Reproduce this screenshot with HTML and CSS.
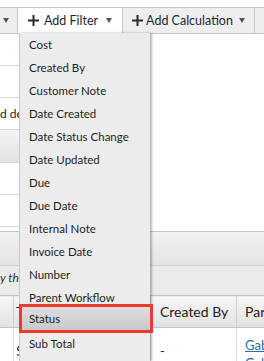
FILE: index.html
```html
<!DOCTYPE html>
<html>
<head>
    <meta name="viewport" content="width=device-width, initial-scale=1">
    <link rel="stylesheet" href="styles.css">
</head>
<body>

<div class="page">

    <div class="toolbar">
        <span class="tb-btn tb-cut"><span class="caret"></span></span>
        <span class="tb-btn tb-open">
            <svg class="plus" width="11" height="11" viewBox="0 0 11 11"><path d="M5.5 0v11M0 5.5h11" stroke="#2b2b2b" stroke-width="2"/></svg>
            <span class="tb-label">Add Filter</span>
            <span class="caret"></span>
        </span>
        <span class="tb-btn tb-calc">
            <svg class="plus" width="11" height="11" viewBox="0 0 11 11"><path d="M5.5 0v11M0 5.5h11" stroke="#2b2b2b" stroke-width="2"/></svg>
            <span class="tb-label">Add Calculation</span>
            <span class="caret"></span>
        </span>
        <span class="tb-btn tb-next"></span>
    </div>

    <div class="upper">
        <div class="side">
            <div class="row"></div>
            <div class="row"></div>
            <div class="row"><span class="field">d descending</span></div>
            <div class="row row-gray"></div>
            <div class="row"></div>
            <div class="row"></div>
        </div>
        <div class="main"></div>
    </div>

    <div class="bar"></div>
    <div class="hint">y the selected column</div>

    <table class="grid">
        <tr>
            <th class="c0"></th>
            <th class="c1">Total</th>
            <th class="c2">Created By</th>
            <th class="c3">Parent</th>
        </tr>
        <tr>
            <td class="c0"></td>
            <td class="c1">$0.00</td>
            <td class="c2">-</td>
            <td class="c3"><a href="#">Gabriel</a><br><a href="#">Gabriel</a></td>
        </tr>
    </table>

    <div class="menu">
        <div class="item">Cost</div>
        <div class="item">Created By</div>
        <div class="item">Customer Note</div>
        <div class="item">Date Created</div>
        <div class="item">Date Status Change</div>
        <div class="item">Date Updated</div>
        <div class="item">Due</div>
        <div class="item">Due Date</div>
        <div class="item">Internal Note</div>
        <div class="item">Invoice Date</div>
        <div class="item">Number</div>
        <div class="item">Parent Workflow</div>
        <div class="item selected">Status</div>
        <div class="item">Sub Total</div>
    </div>

</div>

</body>
</html>
```

FILE: styles.css
```css
body {
    margin: 0;
    font-family: Lato, "Open Sans", sans-serif;
    color: #222;
    background: #fff;
}

.page {
    position: relative;
    width: 264px;
    height: 361px;
    overflow: hidden;
}

/* toolbar */
.toolbar {
    display: flex;
    margin-top: 7px;
    height: 25px;
    border-top: 1px solid #c8c8c8;
    border-bottom: 1px solid #c8c8c8;
    background: #eeeeee;
}

.tb-btn {
    display: flex;
    align-items: center;
    justify-content: center;
    border-right: 1px solid #c8c8c8;
    font-size: 12.5px;
    color: #262630;
    white-space: nowrap;
}

.tb-label {
    margin: 0 8px 0 5px;
}

.tb-cut {
    width: 18px;
    justify-content: flex-start;
    padding-left: 3px;
    box-sizing: border-box;
}

.tb-open {
    width: 104px;
    background: #fff;
}

.tb-calc {
    width: 131px;
}

.tb-calc .tb-label {
    margin: 0 6px 0 3px;
}

.tb-next {
    flex: 1;
    border-right: none;
}

.plus {
    display: block;
}

.caret {
    width: 0;
    height: 0;
    border-left: 3.5px solid transparent;
    border-right: 3.5px solid transparent;
    border-top: 5px solid #555;
}

/* background content */
.upper {
    display: flex;
    height: 197px;
}

.side {
    width: 150px;
}

.row {
    height: 31px;
    border-bottom: 1px solid #d6d6d6;
    display: flex;
    align-items: center;
    font-size: 12px;
}

.row-gray {
    height: 32px;
    background: linear-gradient(#f4f4f4, #e2e2e2);
}

.field {
    white-space: nowrap;
}

.main {
    flex: 1;
    background: #fff;
}

.bar {
    height: 33px;
    border-top: 1px solid #c4c4c4;
    background: linear-gradient(#f3f3f3, #e3e3e3);
}

.hint {
    height: 29px;
    line-height: 24px;
    border-top: 1px solid #d0d0d0;
    background: #ebebeb;
    font-size: 12px;
    font-style: italic;
    color: #333;
    white-space: nowrap;
}

.grid {
    border-collapse: collapse;
    table-layout: fixed;
    width: 300px;
    font-size: 14px;
}

.grid th {
    height: 31px;
    text-align: left;
    font-weight: normal;
    color: #222;
    background: linear-gradient(#f6f6f6, #e2e2e2);
    border-top: 1px solid #c4c4c4;
    border-bottom: 1px solid #c4c4c4;
    border-left: 1px solid #cfcfcf;
    padding: 0 0 0 8px;
    white-space: nowrap;
    overflow: hidden;
}

.grid td {
    vertical-align: top;
    padding: 8px 0 0 8px;
    font-size: 13px;
    border-left: 1px solid #dcdcdc;
    white-space: nowrap;
    overflow: hidden;
}

.grid .c0 { width: 13px; padding: 0; border-left: none; }
.grid .c1 { width: 134px; padding-left: 2px; }
.grid .c2 { width: 76px; padding-left: 9px; }
.grid td.c1 { padding-top: 15px; }
.grid td.c2 { padding-top: 15px; }

.grid a {
    color: #1f6fa8;
    font-size: 13px;
    line-height: 18px;
}

/* dropdown menu */
.menu {
    position: absolute;
    top: 33px;
    left: 19px;
    width: 130px;
    bottom: 0;
    background: #ececec;
    border-left: 1px solid #c8c8c8;
    box-shadow: 2px 0 2px rgba(0, 0, 0, 0.28);
}

.item {
    height: 23px;
    line-height: 23px;
    padding-left: 9px;
    font-size: 11.5px;
    color: #1e1e1e;
    white-space: nowrap;
}

.item.selected {
    margin: -5px -3px -1px -1px;
    height: 23px;
    padding-left: 7px;
    border: 3px solid #ee3a2a;
    background: linear-gradient(#dedede, #c9c9c9);
}
```
